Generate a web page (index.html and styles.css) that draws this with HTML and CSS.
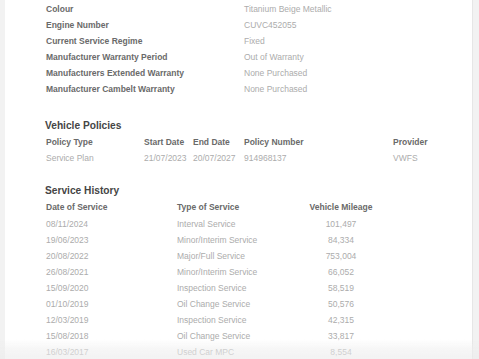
FILE: index.html
```html
<!DOCTYPE html>
<html>
<head>
<meta charset="utf-8">
<link rel="stylesheet" href="styles.css">
</head>
<body>
<div class="card">
  <div class="details">
    <div class="lbl">Colour</div><div class="val">Titanium Beige Metallic</div>
    <div class="lbl">Engine Number</div><div class="val">CUVC452055</div>
    <div class="lbl">Current Service Regime</div><div class="val">Fixed</div>
    <div class="lbl">Manufacturer Warranty Period</div><div class="val">Out of Warranty</div>
    <div class="lbl">Manufacturers Extended Warranty</div><div class="val">None Purchased</div>
    <div class="lbl">Manufacturer Cambelt Warranty</div><div class="val">None Purchased</div>
  </div>

  <h2 class="heading">Vehicle Policies</h2>
  <div class="policies">
    <div class="lbl">Policy Type</div><div class="lbl">Start Date</div><div class="lbl">End Date</div><div class="lbl">Policy Number</div><div class="lbl">Provider</div>
    <div class="val">Service Plan</div><div class="val">21/07/2023</div><div class="val">20/07/2027</div><div class="val">914968137</div><div class="val">VWFS</div>
  </div>

  <h2 class="heading heading-history">Service History</h2>
  <div class="history">
    <div class="lbl">Date of Service</div><div class="lbl">Type of Service</div><div class="lbl mil">Vehicle Mileage</div>
    <div class="val">08/11/2024</div><div class="val">Interval Service</div><div class="val mil">101,497</div>
    <div class="val">19/06/2023</div><div class="val">Minor/Interim Service</div><div class="val mil">84,334</div>
    <div class="val">20/08/2022</div><div class="val">Major/Full Service</div><div class="val mil">753,004</div>
    <div class="val">26/08/2021</div><div class="val">Minor/Interim Service</div><div class="val mil">66,052</div>
    <div class="val">15/09/2020</div><div class="val">Inspection Service</div><div class="val mil">58,519</div>
    <div class="val">01/10/2019</div><div class="val">Oil Change Service</div><div class="val mil">50,576</div>
    <div class="val">12/03/2019</div><div class="val">Inspection Service</div><div class="val mil">42,315</div>
    <div class="val">15/08/2018</div><div class="val">Oil Change Service</div><div class="val mil">33,817</div>
    <div class="val">16/03/2017</div><div class="val">Used Car MPC</div><div class="val mil">8,554</div>
  </div>
</div>
<div class="fade"></div>
</body>
</html>
```

FILE: styles.css
```css
html, body {
  margin: 0;
  padding: 0;
  background: #f2f2f2;
  font-family: "Liberation Sans", Arial, sans-serif;
  overflow: hidden;
  height: 359px;
}
.card {
  background: #ffffff;
  margin: 0 6px 0 5px;
  padding: 1px 0 0 41px;
  border-right: 1px solid #e6e6e6;
  height: 358px;
  overflow: hidden;
}
.lbl {
  font-size: 8.5px;
  font-weight: bold;
  color: #6a6a6a;
  line-height: 16px;
  white-space: nowrap;
}
.val {
  font-size: 8.5px;
  color: #acacac;
  line-height: 16px;
  white-space: nowrap;
}
.details {
  display: grid;
  grid-template-columns: 198px 1fr;
}
.heading {
  margin: 21px 0 0 -1px;
  font-size: 10.2px;
  font-weight: bold;
  color: #454545;
  line-height: 16px;
}
.policies {
  display: grid;
  grid-template-columns: 98px 49px 51px 149px 1fr;
}
.heading-history {
  margin-top: 17px;
}
.history {
  display: grid;
  grid-template-columns: 131px 132px 64px;
}
.history .lbl {
  margin-bottom: 1px;
}
.mil {
  text-align: center;
}
.fade {
  position: fixed;
  left: 0;
  right: 0;
  bottom: 0;
  height: 20px;
  background: linear-gradient(to bottom, rgba(238,238,238,0) 0%, rgba(238,238,238,0.5) 50%, rgba(236,236,236,0.65) 100%);
  pointer-events: none;
}
```
